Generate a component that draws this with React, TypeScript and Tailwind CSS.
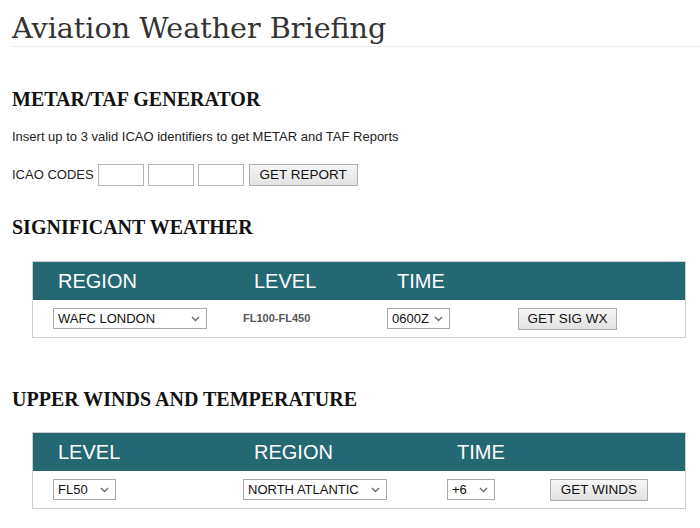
import React from "react";

const sans = { fontFamily: '"Liberation Sans", Arial, sans-serif' };

function Chevron() {
  return (
    <svg width="9" height="6" viewBox="0 0 9 6" className="shrink-0">
      <polyline points="1,1 4.5,4.5 8,1" fill="none" stroke="#6b6b6b" strokeWidth="1.4" />
    </svg>
  );
}

function FakeSelect({ value, w }: { value: string; w: string }) {
  return (
    <div className={`${w} h-[21px] border border-[#a9a9a9] bg-white flex items-center justify-between pl-[4px] pr-[6px] text-[13px] text-[#111]`}>
      <span>{value}</span>
      <Chevron />
    </div>
  );
}

function Btn({ label, w }: { label: string; w: string }) {
  return (
    <button className={`${w} h-[22px] border border-[#adadad] bg-gradient-to-b from-[#f6f6f6] to-[#e2e2e2] text-[13.5px] text-[#111] leading-none flex items-center justify-center`}>
      {label}
    </button>
  );
}

function H2({ children }: { children: React.ReactNode }) {
  return (
    <h2
      className="text-[20px] font-bold text-[#111] leading-[24px]"
      style={{ fontFamily: '"Liberation Serif", "Times New Roman", serif' }}
    >
      {children}
    </h2>
  );
}

export default function App() {
  return (
    <div className="w-[700px] h-[528px] bg-white overflow-hidden pl-[12px]" style={sans}>
      <h1
        className="text-[28.6px] leading-[36px] pt-[10px] pb-[0px] text-[#333] border-b border-[#eeeeee]"
        style={{ fontFamily: '"DejaVu Serif", "Noto Serif", serif' }}
      >
        Aviation Weather Briefing
      </h1>

      <div className="mt-[40px]">
        <H2>METAR/TAF GENERATOR</H2>
      </div>
      <p className="mt-[18px] text-[13px] text-[#222] leading-[16px]">
        Insert up to 3 valid ICAO identifiers to get METAR and TAF Reports
      </p>
      <div className="mt-[19px] flex items-center text-[13px] text-[#222]">
        <span className="mr-[4px]">ICAO CODES</span>
        <div className="w-[46px] h-[22px] border border-[#b5b5b5] bg-white" />
        <div className="w-[46px] h-[22px] border border-[#b5b5b5] bg-white ml-[4px]" />
        <div className="w-[46px] h-[22px] border border-[#b5b5b5] bg-white ml-[4px]" />
        <div className="ml-[5px]">
          <Btn label="GET REPORT" w="w-[109px]" />
        </div>
      </div>

      <div className="mt-[29px]">
        <H2>SIGNIFICANT WEATHER</H2>
      </div>

      <div className="ml-[20px] mt-[22px] w-[654px] border border-[#cfcfcf]">
        <div className="h-[38px] bg-[#246873] grid grid-cols-[190px_144px_131px_1fr] pl-[20px] items-center text-[20px] text-white">
          <span className="pl-[5px]">REGION</span>
          <span className="pl-[11px]">LEVEL</span>
          <span className="pl-[10px]">TIME</span>
          <span />
        </div>
        <div className="h-[37px] grid grid-cols-[190px_144px_131px_1fr] pl-[20px] items-center">
          <FakeSelect value="WAFC LONDON" w="w-[154px]" />
          <span className="text-[11px] font-bold text-[#555]">FL100-FL450</span>
          <FakeSelect value="0600Z" w="w-[63px]" />
          <Btn label="GET SIG WX" w="w-[99px]" />
        </div>
      </div>

      <div className="mt-[49px]">
        <H2>UPPER WINDS AND TEMPERATURE</H2>
      </div>

      <div className="ml-[20px] mt-[21px] w-[654px] border border-[#cfcfcf]">
        <div className="h-[38px] bg-[#246873] grid grid-cols-[190px_204px_103px_1fr] pl-[20px] items-center text-[20px] text-white">
          <span className="pl-[5px]">LEVEL</span>
          <span className="pl-[11px]">REGION</span>
          <span className="pl-[10px]">TIME</span>
          <span />
        </div>
        <div className="h-[37px] grid grid-cols-[190px_204px_103px_1fr] pl-[20px] items-center">
          <FakeSelect value="FL50" w="w-[63px]" />
          <FakeSelect value="NORTH ATLANTIC" w="w-[144px]" />
          <FakeSelect value="+6" w="w-[48px]" />
          <Btn label="GET WINDS" w="w-[98px]" />
        </div>
      </div>
    </div>
  );
}
